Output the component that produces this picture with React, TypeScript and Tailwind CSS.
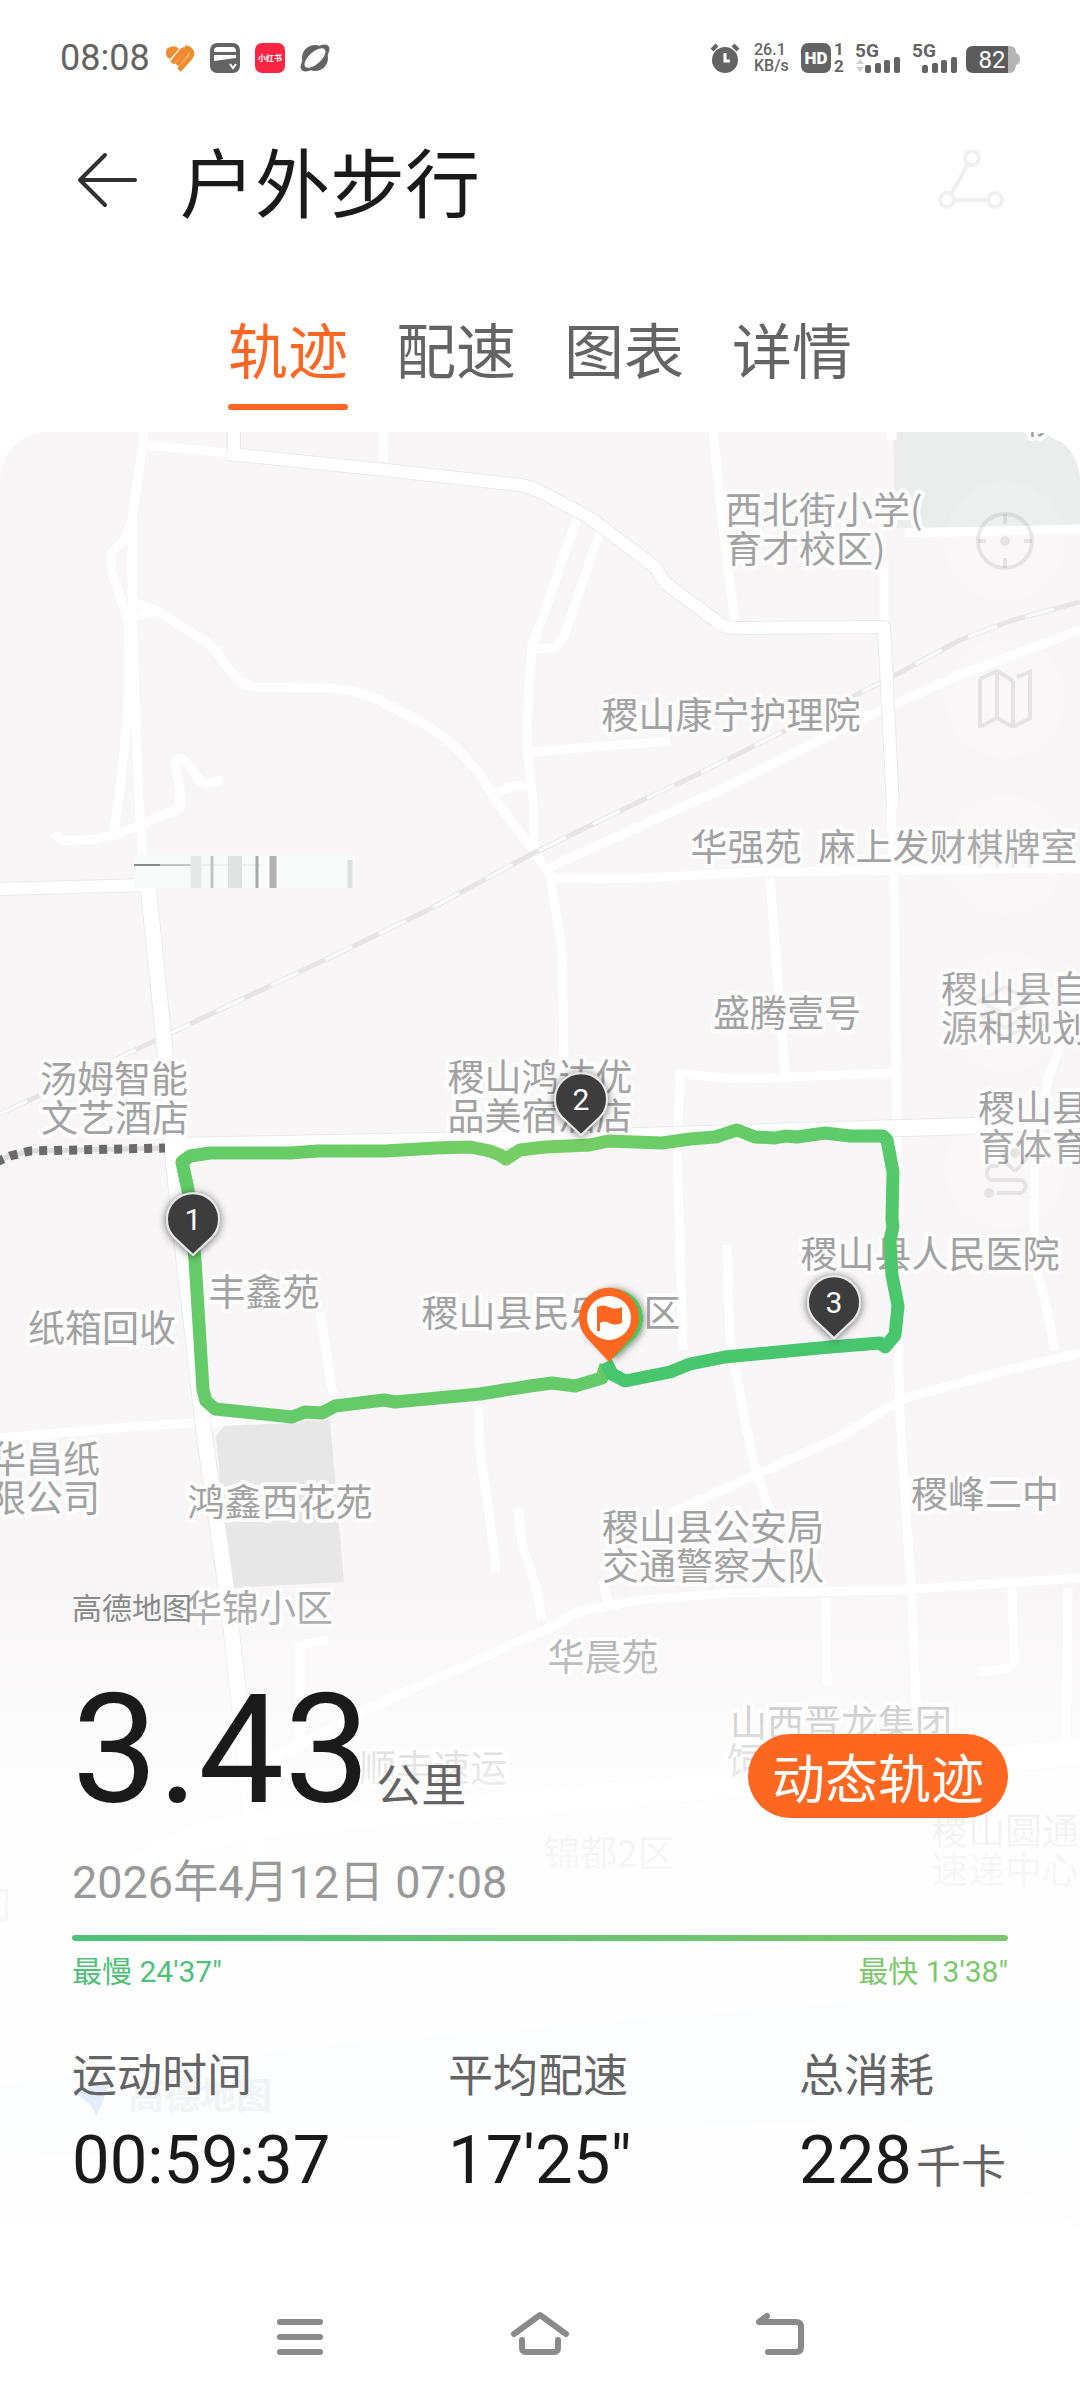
import React, { useState } from 'react';

type labelType = {
  text: string;
  x: number;
  y: number;
  anchor?: 'start' | 'middle' | 'end';
};

const tabs = ['轨迹', '配速', '图表', '详情'];

const stats = [
  { label: '运动时间', value: '00:59:37', unit: '' },
  { label: '平均配速', value: '17\'25"', unit: '' },
  { label: '总消耗', value: '228', unit: '千卡' },
];

// wide roads, drawn with a thin grey casing
const mainRoads = [
  { d: 'M234 420V452', w: 12 },
  { d: 'M229 454L385 470L520 485Q532 487 545 494L590 518L655 567L665 583L715 620Q722 628 736 628L884 627L893 806', w: 12 },
  { d: 'M0 889L146 885', w: 12 },
  { d: 'M148 885L164 1040L172 1148L184 1260L205 1440L228 1600L250 1800L262 1900', w: 15 },
  { d: 'M172 1146L540 1139L970 1126L1080 1120', w: 16 },
  { d: 'M120 1880Q190 1826 300 1820L540 1802L1080 1752', w: 26 },
];

const sideRoads = [
  'M145 420L140 463L132 520L132 595L135 700L139 800L144 880',
  'M145 445L229 453',
  'M384 420L383 462',
  'M131 522L124 540L110 555L112 572L122 602L129 625L128 712L120 790L113 838',
  'M132 602L155 610L205 641Q216 649 228 668Q242 687 258 687L330 688Q356 690 375 698L430 727Q462 750 480 775L498 803L528 843L550 875L562 950L564 1060L566 1130',
  'M134 616L156 612',
  'M55 833Q58 841 68 841L95 839L115 835L140 825L180 808V788L175 765Q178 755 184 760L198 778Q202 784 210 783L223 780',
  'M712 420L722 520L735 622',
  'M577 518L540 625L532 645L527 720V745L533 800L534 850',
  'M600 532L567 628Q562 645 552 648L535 649',
  'M495 793L513 786L530 785',
  'M530 752L670 741',
  'M550 876L560 879L640 878L760 872L1080 868',
  'M548 868L720 790L870 715L960 675L1080 630',
  'M884 560V627',
  'M905 533L1080 529',
  'M892 420V440',
  'M891 800L894 890L897 1130V1300L900 1420L912 1600L918 1750',
  'M770 878L785 1074',
  'M893 1073L740 1079L680 1074L677 1150L683 1350',
  'M1060 1046L1048 1078L1035 1150L1034 1260L1045 1300L1055 1350',
  'M727 1245L730 1340L745 1420L752 1455L770 1515',
  'M1080 1353L1000 1372L905 1398Q880 1412 840 1437L700 1500L670 1514',
  'M0 1438L130 1427L205 1422L300 1418',
  'M320 1312L333 1395',
  'M478 1405L480 1450L490 1520L496 1572',
  'M518 1508L522 1545L537 1590L542 1620',
  'M1080 1578L900 1590L730 1593L640 1600L580 1611L545 1630L365 1710L270 1760',
  'M603 1580L608 1602',
  'M826 1598L827 1685',
  'M1012 1588L1014 1660Q1012 1668 1004 1669L978 1672',
  'M1068 1588L1066 1760',
  'M300 1740V1645L328 1640',
];

const railway =
  'M0 1114L110 1062L335 955L430 909L530 855L620 811L700 773L810 718L890 678L960 640L1010 621L1080 602';

const labels: labelType[] = [
  { text: '校', x: 1024, y: 434, anchor: 'start' },
  { text: '西北街小学(', x: 725, y: 524, anchor: 'start' },
  { text: '育才校区)', x: 725, y: 563, anchor: 'start' },
  { text: '稷山康宁护理院', x: 731, y: 729 },
  { text: '华强苑', x: 746, y: 861 },
  { text: '麻上发财棋牌室', x: 948, y: 861 },
  { text: '盛腾壹号', x: 787, y: 1027 },
  { text: '稷山县自', x: 941, y: 1003, anchor: 'start' },
  { text: '源和规划', x: 941, y: 1042, anchor: 'start' },
  { text: '稷山县', x: 978, y: 1122, anchor: 'start' },
  { text: '育体育', x: 978, y: 1161, anchor: 'start' },
  { text: '稷山县人民医院', x: 930, y: 1268 },
  { text: '稷山县民乐小区', x: 551, y: 1327 },
  { text: '稷山鸿达优', x: 540, y: 1091 },
  { text: '品美宿酒店', x: 540, y: 1130 },
  { text: '汤姆智能', x: 114, y: 1093 },
  { text: '文艺酒店', x: 115, y: 1132 },
  { text: '丰鑫苑', x: 264, y: 1306 },
  { text: '纸箱回收', x: 102, y: 1342 },
  { text: '华昌纸', x: 100, y: 1473, anchor: 'end' },
  { text: '限公司', x: 100, y: 1512, anchor: 'end' },
  { text: '鸿鑫西花苑', x: 280, y: 1516 },
  { text: '华锦小区', x: 259, y: 1622 },
  { text: '稷山县公安局', x: 713, y: 1541 },
  { text: '交通警察大队', x: 713, y: 1580 },
  { text: '稷峰二中', x: 985, y: 1508 },
  { text: '华晨苑', x: 603, y: 1671 },
  { text: '山西晋龙集团', x: 841, y: 1737 },
  { text: '饲', x: 727, y: 1775, anchor: 'start' },
  { text: '顺丰速运', x: 433, y: 1782 },
  { text: '锦都2区', x: 609, y: 1867 },
  { text: '稷山圆通', x: 931, y: 1845, anchor: 'start' },
  { text: '速递中心', x: 931, y: 1884, anchor: 'start' },
  { text: '司', x: 12, y: 1919, anchor: 'end' },
];

const kmPins = [
  { n: 1, x: 193, y: 1220 },
  { n: 2, x: 581, y: 1100 },
  { n: 3, x: 834, y: 1303 },
];

const StatusBar = () => (
  <div className="flex items-center justify-between h-[116px] px-[60px] text-[#646464]">
    <div className="flex items-center gap-[15px]">
      <span className="text-[36px] leading-10">08:08</span>
      <svg className="w-[30px] h-[30px]" viewBox="0 0 30 30" fill="none" stroke="#f08c2e" strokeWidth="5">
        <path d="M2 14Q-1 6 5 4Q11 2 14 6L5 16Z" fill="#f08c2e" stroke="none" />
        <path d="M7 20L16 9Q19 5 21 8Q22 10 20 12L12 22" />
        <path d="M14 27L25 15Q28 11 26 8Q24 5 20 5" />
      </svg>
      <svg className="w-[30px] h-[30px]" viewBox="0 0 30 30">
        <rect width="30" height="30" rx="7" fill="#646464" />
        <path d="M4 8Q4 4 8 4H22Q26 4 26 8V9H4ZM4 12H26V15L4 18Z" fill="#fff" />
        <path d="M20 21L23 25L26 21" fill="none" stroke="#fff" strokeWidth="2" />
      </svg>
      <svg className="w-[30px] h-[30px]" viewBox="0 0 30 30">
        <rect width="30" height="30" rx="7" fill="#fb2442" />
        <text x="15" y="18" textAnchor="middle" fontSize="8" fontWeight="700" fill="#fff">小红书</text>
      </svg>
      <svg className="w-[30px] h-[30px]" viewBox="0 0 30 30">
        <circle cx="15" cy="15" r="13" fill="#646464" />
        <ellipse cx="15" cy="15" rx="18" ry="8" transform="rotate(-42 15 15)" fill="#646464" />
        <ellipse cx="15" cy="15" rx="13" ry="6" transform="rotate(-42 15 15)" fill="#fff" />
      </svg>
    </div>
    <div className="flex items-center">
      <svg className="w-[30px] h-[30px]" viewBox="0 0 30 30" fill="none">
        <circle cx="15" cy="17" r="13" fill="#646464" />
        <path d="M2 7L7 2M28 7L23 2" stroke="#646464" strokeWidth="4" />
        <path d="M15 10V18H20" stroke="#fff" strokeWidth="3" />
      </svg>
      <div className="ml-[14px] w-9 text-[16px] leading-4 font-medium">
        <div>26.1</div>
        <div>KB/s</div>
      </div>
      <svg className="ml-[11px] w-[44px] h-[30px]" viewBox="0 0 44 30" fill="#646464">
        <rect width="30" height="30" rx="7" />
        <text x="15" y="21" textAnchor="middle" fontSize="17" fontWeight="900" fill="#fff">HD</text>
        <text x="33" y="12" fontSize="17" fontWeight="700">1</text>
        <text x="33" y="29" fontSize="17" fontWeight="700">2</text>
      </svg>
      <svg className="ml-[10px] w-[46px] h-[30px]" viewBox="0 0 46 30" fill="#646464">
        <text x="0" y="14" fontSize="19" fontWeight="700">5G</text>
        <path d="M1 21L5 16L9 21ZM1 24L5 29L9 24Z" fill="#d0d0d0" />
        <rect x="10" y="22" width="6" height="8" rx="2" />
        <rect x="20" y="20" width="6" height="10" rx="2" />
        <rect x="29" y="17" width="6" height="13" rx="2" />
        <rect x="39" y="14" width="6" height="16" rx="2" />
      </svg>
      <svg className="ml-[11px] w-[46px] h-[30px]" viewBox="0 0 46 30" fill="#646464">
        <text x="0" y="14" fontSize="19" fontWeight="700">5G</text>
        <rect x="10" y="22" width="6" height="8" rx="2" />
        <rect x="20" y="20" width="6" height="10" rx="2" />
        <rect x="29" y="17" width="6" height="13" rx="2" />
        <rect x="39" y="14" width="6" height="16" rx="2" />
      </svg>
      <svg className="ml-[8px] w-[54px] h-[30px]" viewBox="0 0 54 30">
        <path d="M40 3H44Q50 3 50 10Q54 11 54 16Q54 21 50 22Q49 30 44 30H40Z" fill="#b5b5b5" />
        <path d="M7 3H42V30H7Q0 30 0 23V10Q0 3 7 3Z" fill="#5c5c5c" />
        <text x="26" y="25" textAnchor="middle" fontSize="24" fill="#fff">82</text>
      </svg>
    </div>
  </div>
);

const TrackMap = () => (
  <svg
    className="absolute inset-0 w-full h-full"
    viewBox="0 432 1080 1796"
    preserveAspectRatio="xMidYMin slice"
    fill="none"
    strokeLinejoin="round"
  >
    <defs>
      <linearGradient id="topTrack" gradientUnits="userSpaceOnUse" x1="182" y1="0" x2="893" y2="0">
        <stop offset="0" stopColor="#62cb68" />
        <stop offset="0.5" stopColor="#76cf64" />
        <stop offset="1" stopColor="#58ca6a" />
      </linearGradient>
      <linearGradient id="rightTrack" gradientUnits="userSpaceOnUse" x1="0" y1="1136" x2="0" y2="1350">
        <stop offset="0" stopColor="#58ca6a" />
        <stop offset="1" stopColor="#47c66d" />
      </linearGradient>
      <linearGradient id="fade" x1="0" y1="0" x2="0" y2="1">
        <stop offset="0" stopColor="#fff" stopOpacity="0" />
        <stop offset="0.14" stopColor="#fff" stopOpacity="0.32" />
        <stop offset="0.24" stopColor="#fff" stopOpacity="0.6" />
        <stop offset="0.31" stopColor="#fff" stopOpacity="0.8" />
        <stop offset="0.42" stopColor="#fff" stopOpacity="0.9" />
        <stop offset="1" stopColor="#fff" stopOpacity="0.93" />
      </linearGradient>
      <filter id="pinShadow" x="-50%" y="-50%" width="200%" height="200%">
        <feDropShadow dx="0" dy="1" stdDeviation="4" floodColor="#000" floodOpacity="0.6" />
      </filter>
    </defs>

    <rect y="432" width="1080" height="1796" fill="#f8f6f7" />
    <path d="M893 420H1080V525L895 528Z" fill="#ebedec" />
    <path d="M226 1424L330 1420L344 1582L230 1588L216 1436Z" fill="#e8e7e8" />
    <path d="M0 2085L330 2045L900 1998H1080V2228L900 2120L560 2130L0 2160Z" fill="#dfe8f8" />

    {sideRoads.map((d) => (
      <path key={d} d={d} stroke="#fff" strokeWidth="9" />
    ))}
    <path d={railway} stroke="#e6e4e5" strokeWidth="5" />
    <path d={railway} stroke="#fff" strokeWidth="3" strokeDasharray="30 30" />
    {mainRoads.map((r) => (
      <path key={r.d} d={r.d} stroke="#e9ebea" strokeWidth={r.w + 2} />
    ))}
    {mainRoads.map((r) => (
      <path key={r.d} d={r.d} stroke="#fff" strokeWidth={r.w} />
    ))}

    <path d="M-4 1162L10 1156L30 1151L165 1148" stroke="#dedcdd" strokeWidth="5" />
    <path d="M-4 1162L10 1156L30 1151L165 1148" stroke="#6b696a" strokeWidth="9" strokeDasharray="8 7" />

    {/* broken tile */}
    <rect x="134" y="854" width="222" height="34" rx="4" fill="#f9fbfa" />
    <path d="M134 865H160" stroke="#8a8a8a" strokeWidth="2" />
    <path d="M160 865H200" stroke="#c4c4c4" strokeWidth="2" />
    <path d="M200 865H260" stroke="#e4e4e4" strokeWidth="1" />
    <path d="M196 856V888" stroke="#e6e9e7" strokeWidth="11" />
    <path d="M212 856V888" stroke="#c3c3c3" strokeWidth="3" />
    <path d="M235 856V888" stroke="#e0e2e1" strokeWidth="14" />
    <path d="M257 856V888" stroke="#aaa9a9" strokeWidth="3" />
    <path d="M273 856V888" stroke="#b3b0b1" strokeWidth="7" />
    <path d="M350 860V888" stroke="#dfe1e0" strokeWidth="5" />

    {labels.map((l) => (
      <text
        key={l.text + l.y}
        x={l.x}
        y={l.y}
        textAnchor={l.anchor || 'middle'}
        fontSize="37"
        fill="#a3a2a3"
        stroke="#fcfcfc"
        strokeWidth="8"
        paintOrder="stroke"
        className="font-['Noto_Sans_CJK_SC',sans-serif]"
      >
        {l.text}
      </text>
    ))}

    <g strokeWidth="13">
      <path
        d="M606 1365L602 1378L575 1386L552 1383L530 1386L480 1394L395 1402L384 1400L335 1406L322 1413L305 1412L292 1417L215 1409L206 1401L203 1390L195 1260L188 1190L182 1162"
        stroke="#64cb68"
      />
      <path
        d="M188 1190L182 1162L190 1156L210 1153H290L318 1151L385 1151L435 1148L470 1147L490 1151L500 1155L506 1159L512 1155L520 1150L545 1147L590 1145L608 1141L662 1143L690 1139L715 1137L737 1130L755 1137L775 1138L785 1136L797 1137L825 1133L850 1136L883 1136L887 1140"
        stroke="url(#topTrack)"
      />
      <path
        d="M883 1136L887 1140L893 1172L892 1220L893 1227L890 1240L892 1275L898 1306L895 1335L885 1347L880 1343L830 1347L725 1357L690 1364L670 1372L625 1381L612 1374L606 1362"
        stroke="url(#rightTrack)"
      />
    </g>

    {kmPins.map((p) => (
      <g key={p.n} transform={`translate(${p.x} ${p.y})`}>
        <path
          d="M0 35L-19 17A26 26 0 1 1 19 17Z"
          fill="#3d3d3d"
          stroke="#e8e8e8"
          strokeWidth="2"
          filter="url(#pinShadow)"
        />
        <text y="10" textAnchor="middle" fontSize="30" fill="#fff">
          {p.n}
        </text>
      </g>
    ))}

    <path d="M614 1358L592 1337A29 29 0 1 1 636 1337Z" fill="#47c95c" filter="url(#pinShadow)" />
    <path d="M609 1362L586 1337A30 30 0 1 1 632 1337Z" fill="#fd6720" />
    <circle cx="609" cy="1318" r="22" fill="#fff" />
    <path d="M597 1331V1307Q603 1304 609 1307Q615 1310 622 1307V1323Q615 1326 609 1323Q604 1320 600 1323V1331Z" fill="#fd6720" />

    <rect y="1580" width="1080" height="648" fill="url(#fade)" />
    <path d="M74 2092L110 2082L97 2116L90 2104Z" fill="#e3edfb" />
    <text x="128" y="2109" fontSize="36" fontWeight="700" fill="#f2f4f7">
      高德地图
    </text>
  </svg>
);

const mapControls = [
  {
    name: '定位',
    icon: (
      <>
        <circle cx="30" cy="30" r="27" />
        <path d="M30 3V13M30 57V47M3 30H11M57 30H49" />
        <circle cx="30" cy="30" r="5" fill="currentColor" stroke="none" />
      </>
    ),
  },
  { name: '地图', icon: <path d="M5 11L22 3L38 13M42 9L55 4V50L38 59L22 50L5 59V11M22 3V50M38 13V59" /> },
  { name: '标记', icon: <path d="M5 11V43M22 22V43M38 22V43M55 11V43" strokeOpacity="0.6" /> },
  { name: '图层', icon: <path d="M30 5L56 19L30 33L4 19ZM4 32L30 46L56 32M4 42L30 56L56 42" strokeOpacity="0.7" /> },
  {
    name: '轨迹点',
    icon: (
      <>
        <circle cx="40" cy="14" r="5" fill="currentColor" stroke="none" />
        <path d="M40 32Q28 22 28 14M40 32Q52 22 52 14M24 27H16A8 8 0 0 0 16 41H46A7 7 0 0 1 46 54H22" />
        <circle cx="14" cy="54" r="5" fill="currentColor" stroke="none" />
      </>
    ),
  },
];

const App = () => {
  const [activeTab, setActiveTab] = useState('轨迹');

  return (
    <div className="min-h-screen flex flex-col bg-white font-['Roboto','Noto_Sans_CJK_SC',sans-serif] text-[#1a1a1a]">
      <StatusBar />

      <header className="flex items-center mt-5 h-[88px] px-[72px]">
        <button aria-label="返回">
          <svg className="w-[72px] h-[60px]" viewBox="0 0 72 60" fill="none" stroke="#303030" strokeWidth="4" strokeLinecap="round" strokeLinejoin="round">
            <path d="M63 30H8M33 5L8 30L33 55" />
          </svg>
        </button>
        <h1 className="ml-9 text-[75px] leading-[88px] font-['Noto_Sans_CJK_SC',sans-serif]">户外步行</h1>
        <button aria-label="分享" className="ml-auto">
          <svg className="w-[72px] h-[60px]" viewBox="0 0 72 60" fill="none" stroke="#f0f0f0" strokeWidth="4">
            <circle cx="36" cy="8" r="7" />
            <circle cx="11" cy="50" r="7" />
            <circle cx="59" cy="50" r="7" />
            <path d="M32 14L15 44M18 50H52" />
          </svg>
        </button>
      </header>

      <nav className="flex justify-center gap-12 mt-[88px] font-['Noto_Sans_CJK_SC',sans-serif]">
        {tabs.map((tab) => (
          <button
            key={tab}
            onClick={() => setActiveTab(tab)}
            className={
              tab === activeTab
                ? 'text-[60px] leading-[72px] text-[#fa6724]'
                : 'text-[60px] leading-[72px] text-[#646464]'
            }
          >
            {tab}
            <span
              className={
                tab === activeTab
                  ? 'block mt-5 h-[6px] rounded-full bg-[#fa6724]'
                  : 'block mt-5 h-[6px]'
              }
            />
          </button>
        ))}
      </nav>

      <main className="relative flex flex-col grow mt-[22px] rounded-t-[48px] overflow-hidden">
        <TrackMap />

        <div className="absolute right-[15px] top-[49px] flex flex-col gap-[37px]">
          {mapControls.map((c) => (
            <button
              key={c.name}
              aria-label={c.name}
              className="flex items-center justify-center w-[120px] h-[120px] rounded-full bg-white/10 text-black/8"
            >
              <svg className="w-[60px] h-[60px]" viewBox="0 0 60 60" fill="none" stroke="currentColor" strokeWidth="4">
                {c.icon}
              </svg>
            </button>
          ))}
        </div>

        <div className="grow min-h-[1000px]" />

        <section className="relative px-[72px] pb-[30px]">
          <p className="text-[30px] leading-9 text-[#8a8a8a]">高德地图</p>

          <div className="flex items-end justify-between mt-[43px]">
            <p className="flex items-baseline gap-[6px]">
              <span className="text-[153px] leading-[160px]">3.43</span>
              <span className="text-[45px] leading-[52px] text-[#646464]">公里</span>
            </p>
            <button className="mb-3 h-[84px] px-6 rounded-full bg-[#fd6720] text-[53px] leading-[72px] text-white font-['Noto_Sans_CJK_SC',sans-serif]">
              动态轨迹
            </button>
          </div>

          <p className="mt-[27px] text-[45px] leading-[52px] text-[#999]">2026年4月12日 07:08</p>

          <div className="mt-[26px] h-[6px] rounded-full bg-linear-to-r from-[#4fc078] to-[#7cc86c]" />
          <div className="flex justify-between mt-[13px] text-[30px] leading-9">
            <span className="text-[#4fc078]">最慢 24'37"</span>
            <span className="text-[#7cc86c]">最快 13'38"</span>
          </div>

          <dl className="grid grid-cols-[376fr_351fr_209fr] mt-[61px]">
            {stats.map((s) => (
              <div key={s.label}>
                <dt className="text-[45px] leading-[52px] text-[#646464]">{s.label}</dt>
                <dd className="flex items-baseline gap-1 mt-[19px] text-[67px] leading-[76px] whitespace-nowrap">
                  {s.value}
                  {s.unit && <span className="text-[45px] leading-[52px] text-[#646464]">{s.unit}</span>}
                </dd>
              </div>
            ))}
          </dl>
        </section>
      </main>

      <nav className="flex justify-center gap-[180px] pt-[82px] pb-[42px]">
        <button aria-label="菜单">
          <svg className="w-[60px] h-[48px]" viewBox="0 0 60 48" stroke="#8a8a8a" strokeWidth="6" strokeLinecap="round">
            <path d="M10 12H50M10 27H50M10 42H50" />
          </svg>
        </button>
        <button aria-label="主页">
          <svg className="w-[60px] h-[48px]" viewBox="0 0 60 48" fill="none" stroke="#8a8a8a" strokeWidth="6" strokeLinecap="round" strokeLinejoin="round">
            <path d="M4 24L30 5L56 24M12 30V38Q12 42 16 42H44Q48 42 48 38V30" />
          </svg>
        </button>
        <button aria-label="后退">
          <svg className="w-[60px] h-[48px]" viewBox="0 0 60 48" fill="none" stroke="#8a8a8a" strokeWidth="6" strokeLinecap="round" strokeLinejoin="round">
            <path d="M17 6L9 12H46Q51 12 51 17V37Q51 42 46 42H18" />
          </svg>
        </button>
      </nav>
    </div>
  );
};

export default App;
